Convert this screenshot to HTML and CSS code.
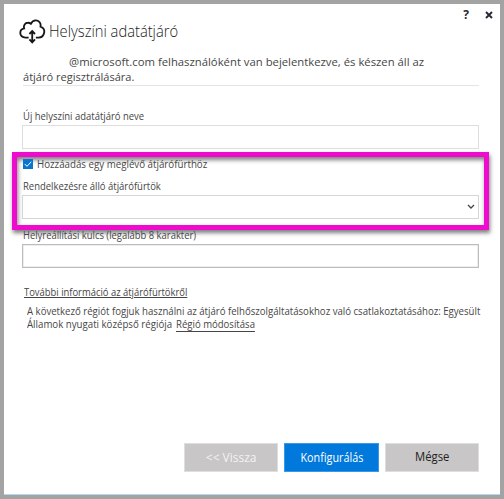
FILE: index.html
```
<!DOCTYPE html>
<html lang="hu">
<head>
<meta charset="utf-8">
<title>Helyszíni adatátjáró</title>
<link rel="stylesheet" href="styles.css">
</head>
<body>
<main class="window">
  <div class="controls">
    <span class="help">?</span>
    <svg class="close" viewBox="0 0 8 8"><path d="M1 1l6 6M7 1L1 7"/></svg>
  </div>
  <header class="header">
    <svg class="cloud" viewBox="0 0 28 26">
      <path d="M10 19.3H6.5C3.5 19.3 1.3 17.4 1.3 14.5C1.3 12 3 10.2 5.3 9.8C4.4 6.6 6.3 4 9.2 3.9C10.5 3.8 11.5 4.3 12.3 5C13.4 2.8 15.3 1.3 17.8 1.5C21.2 1.8 23 4.5 22.3 8C25.1 9 26.7 11.3 26.1 14.3C25.5 17.4 23.3 19.3 20.3 19.3H17.5"/>
      <path d="M13.7 13v11M10.8 15.6l2.9-3 2.9 3M10.8 21.3l2.9 3 2.9-3"/>
    </svg>
    <h1 class="title"><span class="t-title">Helyszíni adatátjáró</span></h1>
  </header>
  <section class="signed-in">
    <p class="account"><span class="t-account">@microsoft.com felhasználóként van bejelentkezve, és készen áll az</span></p>
    <p><span class="t-register">átjáró regisztrálására.</span></p>
  </section>
  <form class="form">
    <label class="label name-label"><span class="t-name">Új helyszíni adatátjáró neve</span></label>
    <div class="field light"></div>
    <div class="cluster">
      <div class="check-row">
        <svg class="checkbox" viewBox="0 0 10 10"><rect width="10" height="10"/><path d="M1.8 5l2.2 2.3L8.2 2.8"/></svg>
        <span class="t-check">Hozzáadás egy meglévő átjárófürthöz</span>
      </div>
      <label class="label"><span class="t-clusters">Rendelkezésre álló átjárófürtök</span></label>
      <div class="field select"><svg class="chevron" viewBox="0 0 8 6"><path d="M1 1l3 3 3-3"/></svg></div>
    </div>
    <label class="label key-label"><span class="t-key">Helyreállítási kulcs (legalább 8 karakter)</span></label>
    <div class="field strong"></div>
  </form>
  <a class="more"><span class="t-more">További információ az átjárófürtökről</span></a>
  <section class="region">
    <p><span class="t-region">A következő régiót fogjuk használni az átjáró felhőszolgáltatásokhoz való csatlakoztatásához: Egyesült</span></p>
    <p class="region-line"><span class="t-state">Államok nyugati középső régiója</span><a class="t-change">Régió módosítása</a></p>
  </section>
  <footer class="actions">
    <div class="button disabled"><span class="t-back">&lt;&lt; Vissza</span></div>
    <div class="button primary"><span class="t-config">Konfigurálás</span></div>
    <div class="button cancel"><span class="t-cancel">Mégse</span></div>
  </footer>
</main>
</body>
</html>
```
FILE: styles.css
```
* { box-sizing: border-box; }
body { margin: 0; background: #a3a3a3; font-family: "Open Sans", "Noto Sans", sans-serif; color: #464646; }
p, h1 { margin: 0; }
svg { fill: none; display: block; flex: none; }
span, a { white-space: nowrap; }
span, .t-change { display: inline-block; transform-origin: 0 50%; vertical-align: top; }

.window {
  width: 496px; height: 491px; margin: 4px; overflow: clip;
  background: #fff; border-bottom: 1px solid #b5d7ef;
  display: flex; flex-direction: column;
}
.controls { height: 15px; display: flex; justify-content: flex-end; align-items: flex-start; gap: 16px; padding: 3px 7px 0 0; }
.help { font-size: 12px; line-height: 16px; font-weight: 700; color: #292935; }
.close { width: 8px; height: 8px; margin-top: 4px; stroke: #292935; stroke-width: 1.9; }
.header { height: 35px; display: flex; padding-left: 15px; }
.cloud { width: 27px; height: 25px; stroke: #171717; stroke-width: 1.9; }
.title { margin-left: 3px; font-size: 15.5px; line-height: 24px; font-weight: 300; color: #222; }

.signed-in { height: 32px; margin: 0 21px 0 19px; border-bottom: 1px solid #e5e5e5; font-size: 11.5px; line-height: 15px; }
.signed-in p { height: 15px; }
.signed-in .account { padding-left: 46px; }

.form { height: 182px; margin: 0 21px 0 18px; }
.label { display: block; height: 16px; padding-left: 1px; font-size: 11px; line-height: 16px; }
.name-label { margin-top: 22px; }
.field { height: 24px; margin-top: 1px; border: 1px solid #d5d5d5; }
.light { border-color: #dedede; }
.strong { border: 1px solid #bdbdbd; box-shadow: inset 0 0 0 1px #ededed; }
.cluster {
  height: 78px; margin: 3px -10px 0; padding: 0 5px;
  border: 5px solid #ef0bcd; box-shadow: 1px 3px 4px rgba(0,0,0,.5), inset 1px 3px 4px rgba(0,0,0,.5);
}
.check-row { display: flex; height: 14px; align-items: center; font-size: 11px; line-height: 14px; }
.checkbox { width: 10px; height: 10px; margin: 0 4px 0 1px; }
.checkbox rect { fill: #0876d1; }
.checkbox path { stroke: #fff; stroke-width: 1; }
.cluster .label { margin-top: 7px; }
.select { display: flex; justify-content: flex-end; align-items: center; padding-right: 3px; }
.chevron { width: 8px; height: 6px; stroke: #444; stroke-width: 1.3; }
.key-label { margin-top: -3px; }

.more { height: 17px; margin: 17px 0 0 20px; font-size: 11px; line-height: 14px; }
.t-more { text-decoration: underline; text-underline-offset: 1px; }
.region { margin: 2px 0 0 23px; width: 460px; font-size: 11px; line-height: 13px; }
.region p { height: 13px; }
.region-line { display: flex; }
.t-state { width: 149px; }
.t-change { text-decoration: underline; text-underline-offset: 3px; }

/* Narrow the humanist face to the widths of the interface font. */
.t-title { transform: scaleX(.95); }
.t-account { transform: scaleX(.983); }
.t-register { transform: scaleX(.96); }
.t-name { transform: scaleX(.86); }
.t-check { transform: scaleX(.885); }
.t-clusters { transform: scaleX(.862); }
.t-key { transform: scaleX(.857); }
.t-more { transform: scaleX(.856); }
.t-region { transform: scaleX(.874); }
.t-state { transform: scaleX(.88); }
.t-change { transform: scaleX(.87); }
.actions .t-config, .actions .t-cancel { transform-origin: 50% 50%; transform: scaleX(.9); }
.actions .t-cancel { transform: scaleX(.94); }

.actions { display: flex; gap: 6px; margin: auto 21px 22px 180px; }
.button { flex: 1; height: 29px; border: 1px solid #dedede; background: #c8c6c6; font-size: 12px; line-height: 27px; text-align: center; }
.disabled { color: #f3f3f3; }
.primary { background: #0078dc; border-color: #3a99e5; color: #fff; }
.cancel { color: #222; line-height: 25px; }
```
